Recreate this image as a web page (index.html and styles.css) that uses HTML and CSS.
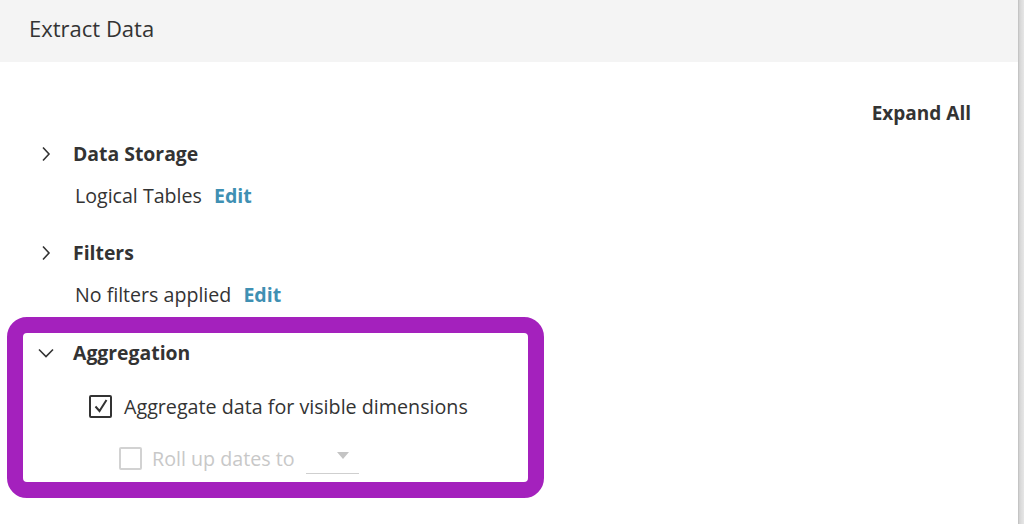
FILE: index.html
```html
<!DOCTYPE html>
<html lang="en">
<head>
<meta charset="utf-8">
<title>Extract Data</title>
<link rel="stylesheet" href="styles.css">
</head>
<body>
<div class="page">
  <div class="panel">
    <header class="header">Extract Data</header>
    <main class="main">
      <div class="toolbar"><span class="expand-all">Expand All</span></div>

      <section class="section">
        <div class="section-head">
          <svg class="chev" width="16" height="16" viewBox="0 0 16 16"><path d="M5 1.5 L11 8 L5 14.5" fill="none" stroke="#333" stroke-width="1.6"/></svg>
          <span class="section-title">Data Storage</span>
        </div>
        <div class="section-body">Logical Tables <a class="edit">Edit</a></div>
      </section>

      <section class="section">
        <div class="section-head">
          <svg class="chev" width="16" height="16" viewBox="0 0 16 16"><path d="M5 1.5 L11 8 L5 14.5" fill="none" stroke="#333" stroke-width="1.6"/></svg>
          <span class="section-title">Filters</span>
        </div>
        <div class="section-body">No filters applied <a class="edit">Edit</a></div>
      </section>

      <section class="section highlight">
        <div class="section-head">
          <svg class="chev" width="16" height="16" viewBox="0 0 16 16"><path d="M1 4.5 L8 11.5 L15 4.5" fill="none" stroke="#333" stroke-width="1.6"/></svg>
          <span class="section-title">Aggregation</span>
        </div>
        <label class="check-row">
          <span class="box checked">
            <svg width="18" height="18" viewBox="0 0 18 18"><path d="M3.5 9.5 L7.5 14 L14.5 3" fill="none" stroke="#333" stroke-width="2"/></svg>
          </span>
          <span>Aggregate data for visible dimensions</span>
        </label>
        <label class="check-row disabled">
          <span class="box"></span>
          <span>Roll up dates to</span>
          <span class="select"><span class="tri"></span></span>
        </label>
      </section>
    </main>
  </div>
  <div class="scroll-edge"></div>
</div>
</body>
</html>
```
FILE: styles.css
```css
html, body {
  margin: 0;
  padding: 0;
  background: #fff;
}
body {
  font-family: "Open Sans", "Noto Sans", "Liberation Sans", sans-serif;
  color: #333;
  width: 1024px;
  height: 524px;
  overflow: hidden;
}
.page {
  display: flex;
  height: 524px;
}
.panel {
  flex: 1;
  min-width: 0;
}
.scroll-edge {
  width: 5px;
  background: linear-gradient(to right, #d0d0d0, #dcdcdc 40%, #e6e6e6);
  border-left: 1px solid #c4c4c4;
}
.header {
  height: 62px;
  box-sizing: border-box;
  background: #f4f4f4;
  padding: 16px 0 0 29px;
  font-size: 22px;
  line-height: 24px;
  color: #333;
}
.main {
  padding: 39px 0 0 7px;
}
.toolbar {
  display: flex;
  justify-content: flex-end;
  padding-right: 47px;
  height: 24px;
  line-height: 24px;
}
.expand-all {
  font-weight: 700;
  font-size: 19px;
}
.section {
  padding-left: 31px;
  margin-top: 17px;
}
.section + .section {
  margin-top: 33px;
}
.section-head {
  display: flex;
  align-items: center;
  gap: 19px;
  height: 24px;
}
.chev {
  flex: none;
}
.section-title {
  font-weight: 700;
  font-size: 19.4px;
  line-height: 24px;
}
.section-body {
  margin-top: 18px;
  padding-left: 37px;
  font-size: 19.6px;
  line-height: 24px;
}
.edit {
  color: #3f90b3;
  font-weight: 700;
  margin-left: 7px;
}
.section.highlight {
  margin-top: 10px;
  width: 490px;
  border: 16px solid #a421bd;
  border-radius: 20px;
  padding: 8px 0 12px 15px;
}
.check-row {
  display: flex;
  align-items: center;
  height: 24px;
  font-size: 19.7px;
  padding-left: 51px;
  margin-top: 29px;
  gap: 12px;
}
.check-row + .check-row {
  margin-top: 28px;
}
.box {
  width: 19px;
  height: 19px;
  border: 2px solid #333;
  border-radius: 2px;
  display: flex;
  align-items: center;
  justify-content: center;
  flex: none;
}
.disabled {
  color: #c8c8c8;
  padding-left: 81px;
  gap: 10px;
}
.disabled .box {
  border-color: #d2d2d2;
}
.select {
  margin-left: 1px;
  width: 53px;
  height: 24px;
  border-bottom: 1.5px solid #cfcfcf;
  position: relative;
  top: 4px;
  box-sizing: border-box;
}
.tri {
  position: absolute;
  left: 31px;
  top: 2px;
  width: 0;
  height: 0;
  border-left: 6px solid transparent;
  border-right: 6px solid transparent;
  border-top: 7px solid #c4c4c4;
}
```
